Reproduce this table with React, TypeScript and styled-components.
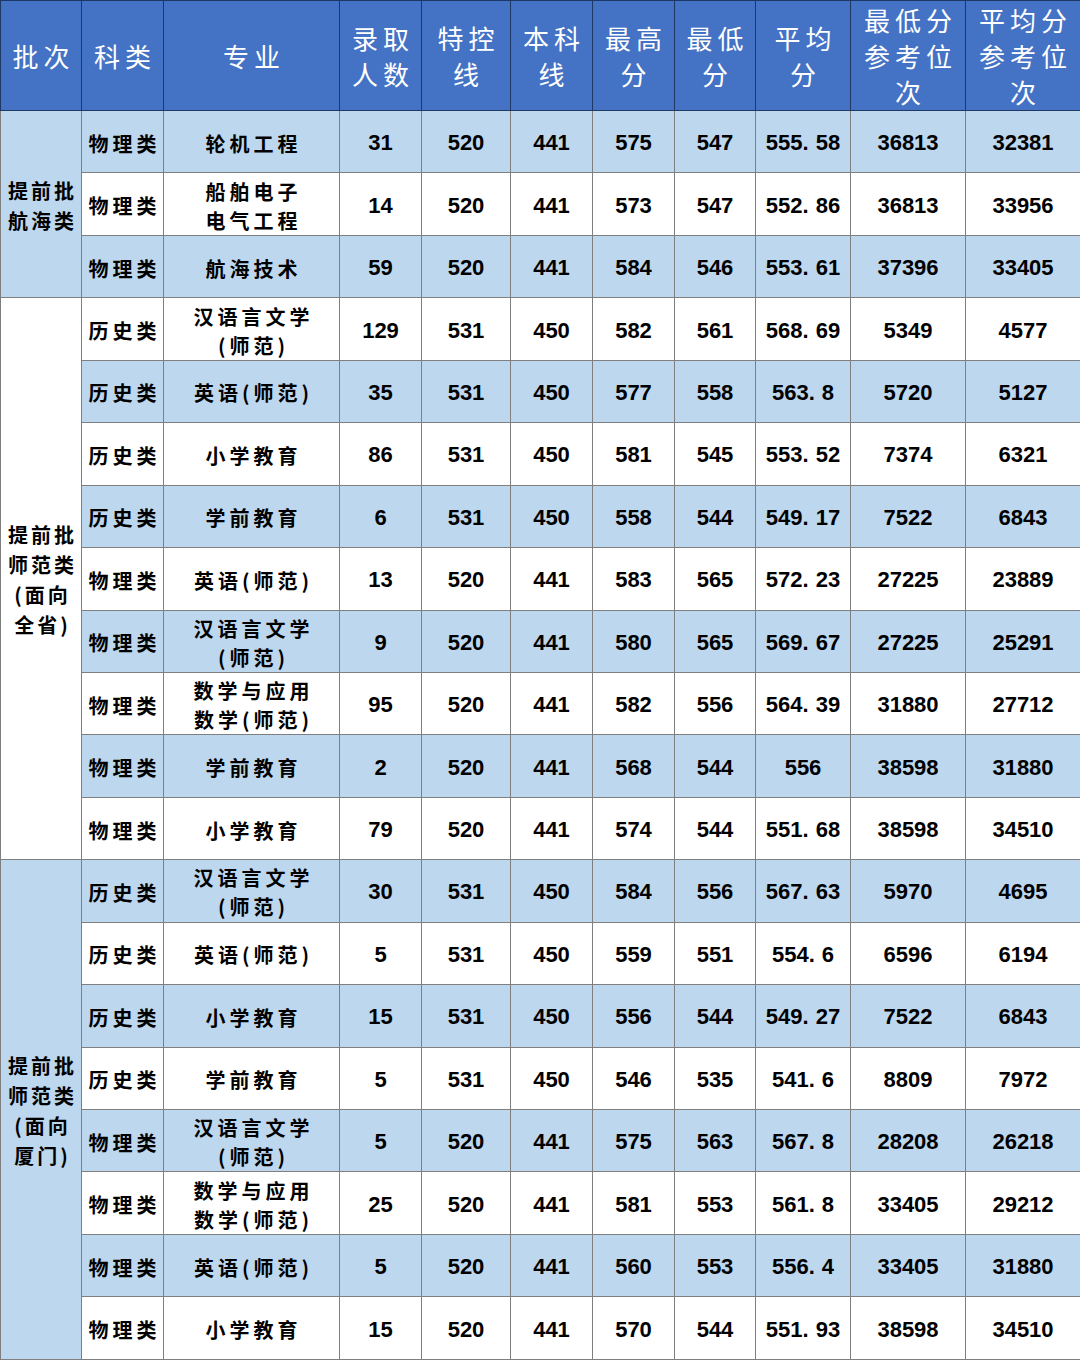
import React from "react";
import styled, { createGlobalStyle } from "styled-components";

const Global = createGlobalStyle`
  html, body { margin: 0; padding: 0; background: #ffffff; }
  body { font-family: "Noto Sans CJK SC", "Noto Sans", sans-serif; }
`;

const Table = styled.table`
  width: 1080px;
  border-collapse: collapse;
  table-layout: fixed;
`;

const HeadCell = styled.th`
  background: #4472c4;
  color: #ffffff;
  font-family: "Noto Sans CJK SC", sans-serif;
  font-weight: 400;
  font-size: 26px;
  line-height: 36px;
  letter-spacing: 5px;
  text-align: center;
  vertical-align: middle;
  border: 1px solid #1f3864;
  padding: 0 0 0 5px;
  height: 109px;
`;

const Row = styled.tr<{ $blue: boolean }>`
  height: 62.45px;
  background: ${(p) => (p.$blue ? "#bdd7ee" : "#ffffff")};
`;

const Cell = styled.td`
  border: 1px solid #7f7f7f;
  text-align: center;
  vertical-align: middle;
  padding: 3px 0 0 0;
  color: #000000;
`;

const TextCell = styled(Cell)`
  font-family: "Noto Sans CJK SC", sans-serif;
  font-weight: 700;
  font-size: 20px;
  line-height: 29px;
  letter-spacing: 4px;
  padding-left: 4px;
`;

const GroupCell = styled(TextCell)<{ $blue: boolean }>`
  background: ${(p) => (p.$blue ? "#bdd7ee" : "#ffffff")};
  font-size: 20px;
  line-height: 30px;
  letter-spacing: 3px;
  padding-left: 3px;
`;

const NumCell = styled(Cell)`
  font-family: "Liberation Sans", Arial, sans-serif;
  font-weight: 700;
  font-size: 22px;
  line-height: 26px;
`;

const Dot = styled.span`
  padding-right: 7px;
`;

type R = [string, string, string, string, string, string, string, string, string, string];

const groups: { label: string[]; rows: R[] }[] = [
  {
    label: ["提前批", "航海类"],
    rows: [
      ["物理类", "轮机工程", "31", "520", "441", "575", "547", "555.58", "36813", "32381"],
      ["物理类", "船舶电子\n电气工程", "14", "520", "441", "573", "547", "552.86", "36813", "33956"],
      ["物理类", "航海技术", "59", "520", "441", "584", "546", "553.61", "37396", "33405"],
    ],
  },
  {
    label: ["提前批", "师范类", "(面向", "全省)"],
    rows: [
      ["历史类", "汉语言文学\n(师范)", "129", "531", "450", "582", "561", "568.69", "5349", "4577"],
      ["历史类", "英语(师范)", "35", "531", "450", "577", "558", "563.8", "5720", "5127"],
      ["历史类", "小学教育", "86", "531", "450", "581", "545", "553.52", "7374", "6321"],
      ["历史类", "学前教育", "6", "531", "450", "558", "544", "549.17", "7522", "6843"],
      ["物理类", "英语(师范)", "13", "520", "441", "583", "565", "572.23", "27225", "23889"],
      ["物理类", "汉语言文学\n(师范)", "9", "520", "441", "580", "565", "569.67", "27225", "25291"],
      ["物理类", "数学与应用\n数学(师范)", "95", "520", "441", "582", "556", "564.39", "31880", "27712"],
      ["物理类", "学前教育", "2", "520", "441", "568", "544", "556", "38598", "31880"],
      ["物理类", "小学教育", "79", "520", "441", "574", "544", "551.68", "38598", "34510"],
    ],
  },
  {
    label: ["提前批", "师范类", "(面向", "厦门)"],
    rows: [
      ["历史类", "汉语言文学\n(师范)", "30", "531", "450", "584", "556", "567.63", "5970", "4695"],
      ["历史类", "英语(师范)", "5", "531", "450", "559", "551", "554.6", "6596", "6194"],
      ["历史类", "小学教育", "15", "531", "450", "556", "544", "549.27", "7522", "6843"],
      ["历史类", "学前教育", "5", "531", "450", "546", "535", "541.6", "8809", "7972"],
      ["物理类", "汉语言文学\n(师范)", "5", "520", "441", "575", "563", "567.8", "28208", "26218"],
      ["物理类", "数学与应用\n数学(师范)", "25", "520", "441", "581", "553", "561.8", "33405", "29212"],
      ["物理类", "英语(师范)", "5", "520", "441", "560", "553", "556.4", "33405", "31880"],
      ["物理类", "小学教育", "15", "520", "441", "570", "544", "551.93", "38598", "34510"],
    ],
  },
];

const widths = [81, 82, 176, 82, 89, 82, 82, 81, 95, 115, 115];

const headers: string[][] = [
  ["批次"],
  ["科类"],
  ["专业"],
  ["录取", "人数"],
  ["特控", "线"],
  ["本科", "线"],
  ["最高", "分"],
  ["最低", "分"],
  ["平均", "分"],
  ["最低分", "参考位", "次"],
  ["平均分", "参考位", "次"],
];

const Lines: React.FC<{ lines: string[] }> = ({ lines }) => (
  <>
    {lines.map((l, i) => (
      <React.Fragment key={i}>
        {i > 0 && <br />}
        {l}
      </React.Fragment>
    ))}
  </>
);

const Num: React.FC<{ v: string }> = ({ v }) => {
  const i = v.indexOf(".");
  if (i < 0) return <>{v}</>;
  return (
    <>
      {v.slice(0, i)}
      <Dot>.</Dot>
      {v.slice(i + 1)}
    </>
  );
};

export default function App() {
  let idx = 0;
  return (
    <>
      <Global />
      <Table>
        <colgroup>
          {widths.map((w, i) => (
            <col key={i} style={{ width: w }} />
          ))}
        </colgroup>
        <thead>
          <tr>
            {headers.map((h, i) => (
              <HeadCell key={i}>
                <Lines lines={h} />
              </HeadCell>
            ))}
          </tr>
        </thead>
        <tbody>
          {groups.map((g, gi) =>
            g.rows.map((r, ri) => {
              idx += 1;
              const blue = idx % 2 === 1;
              return (
                <Row key={`${gi}-${ri}`} $blue={blue}>
                  {ri === 0 && (
                    <GroupCell rowSpan={g.rows.length} $blue={gi !== 1}>
                      <Lines lines={g.label} />
                    </GroupCell>
                  )}
                  <TextCell>{r[0]}</TextCell>
                  <TextCell>
                    <Lines lines={r[1].split("\n")} />
                  </TextCell>
                  {r.slice(2).map((v, k) => (
                    <NumCell key={k}>
                      <Num v={v} />
                    </NumCell>
                  ))}
                </Row>
              );
            })
          )}
        </tbody>
      </Table>
    </>
  );
}
